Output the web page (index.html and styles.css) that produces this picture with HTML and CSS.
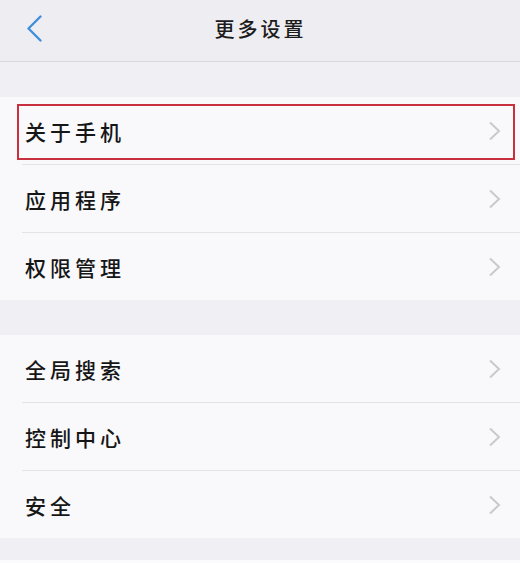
FILE: index.html
```html
<!DOCTYPE html>
<html lang="zh">
<head>
<meta charset="utf-8">
<title>更多设置</title>
<link rel="stylesheet" href="styles.css">
</head>
<body>
<div class="screen">
  <header class="topbar">
    <svg class="back" width="17" height="27" viewBox="0 0 17 27"><path d="M14.5 1.5 L2.5 13.5 L14.5 25.5" fill="none" stroke="#3f8fdc" stroke-width="2.4" stroke-linecap="round" stroke-linejoin="round"/></svg>
    <h1 class="title">更多设置</h1>
  </header>
  <div class="gap"></div>
  <ul class="group">
    <li class="row highlighted"><span class="label">关于手机</span><svg class="chev" width="13" height="20" viewBox="0 0 13 20"><path d="M2 1.5 L11 10 L2 18.5" fill="none" stroke="#c9c9ce" stroke-width="2"/></svg><span class="mark"></span></li>
    <li class="row"><span class="label">应用程序</span><svg class="chev" width="13" height="20" viewBox="0 0 13 20"><path d="M2 1.5 L11 10 L2 18.5" fill="none" stroke="#c9c9ce" stroke-width="2"/></svg></li>
    <li class="row"><span class="label">权限管理</span><svg class="chev" width="13" height="20" viewBox="0 0 13 20"><path d="M2 1.5 L11 10 L2 18.5" fill="none" stroke="#c9c9ce" stroke-width="2"/></svg></li>
  </ul>
  <div class="gap"></div>
  <ul class="group">
    <li class="row"><span class="label">全局搜索</span><svg class="chev" width="13" height="20" viewBox="0 0 13 20"><path d="M2 1.5 L11 10 L2 18.5" fill="none" stroke="#c9c9ce" stroke-width="2"/></svg></li>
    <li class="row"><span class="label">控制中心</span><svg class="chev" width="13" height="20" viewBox="0 0 13 20"><path d="M2 1.5 L11 10 L2 18.5" fill="none" stroke="#c9c9ce" stroke-width="2"/></svg></li>
    <li class="row"><span class="label">安全</span><svg class="chev" width="13" height="20" viewBox="0 0 13 20"><path d="M2 1.5 L11 10 L2 18.5" fill="none" stroke="#c9c9ce" stroke-width="2"/></svg></li>
  </ul>
  <div class="footer"></div>
</div>
</body>
</html>
```
FILE: styles.css
```css
html, body {
  margin: 0;
  padding: 0;
  background: #f0eff3;
}
.screen {
  width: 520px;
  height: 563px;
  overflow: hidden;
  background: #f0eff3;
  font-family: "Noto Sans CJK SC", "Noto Sans", sans-serif;
  color: #1a1a1a;
}
.topbar {
  height: 61px;
  border-bottom: 1px solid #d8d8db;
  background: #eeedf1;
  display: flex;
  align-items: center;
  justify-content: center;
  position: relative;
}
.back {
  position: absolute;
  left: 26px;
  top: 15px;
}
.title {
  margin: 0 0 4px 0;
  font-size: 20px;
  font-weight: 500;
  letter-spacing: 3px;
  padding-left: 1px;
  color: #1c1c1c;
}
.gap {
  height: 35px;
}
.group {
  list-style: none;
  margin: 0;
  padding: 0 0 0 22px;
  background: #f9f8fb;
}
.row {
  height: 67px;
  border-bottom: 1px solid #e3e2e7;
  display: flex;
  align-items: center;
  justify-content: space-between;
  padding-right: 19px;
  position: relative;
}
.row:last-child {
  border-bottom: none;
}
.label {
  font-size: 21px;
  font-weight: 500;
  letter-spacing: 4px;
  margin-left: 3px;
  color: #161616;
}
.chev {
  display: block;
}
.mark {
  position: absolute;
  left: -5px;
  right: 5px;
  top: 7px;
  height: 52px;
  border: 2px solid #c9303d;
}
.footer {
  height: 22px;
  background: #f0eff3;
  border-bottom: 3px solid #fbfbfd;
}
```
